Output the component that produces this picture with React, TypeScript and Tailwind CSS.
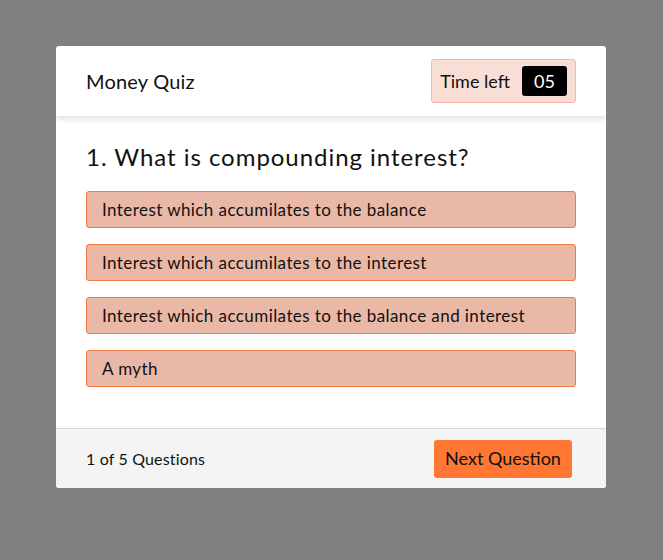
import React from 'react'

const options = [
  'Interest which accumilates to the balance',
  'Interest which accumilates to the interest',
  'Interest which accumilates to the balance and interest',
  'A myth',
]

export default function App() {
  return (
    <div
      className="min-h-[560px] w-full bg-[#808080] pt-[46px] text-[#111]"
      style={{ fontFamily: 'Lato, "Open Sans", sans-serif' }}
    >
      <div className="ml-[56px] w-[550px] overflow-hidden rounded-[3px] bg-white">
        {/* header */}
        <div className="relative z-10 flex h-[70px] items-center justify-between pl-[30px] pr-[30px] shadow-[0_3px_6px_rgba(0,0,0,0.12)]">
          <div className="text-[20px] tracking-[0.01em]">Money Quiz</div>
          <div className="flex h-[44px] items-center gap-[12px] rounded-[3px] border border-[#f5b8a5] bg-[#f8ded4] pl-[8px] pr-[8px]">
            <span className="text-[18px]">Time left</span>
            <span className="flex h-[30px] w-[45px] items-center justify-center rounded-[3px] bg-black text-[18px] text-white">
              05
            </span>
          </div>
        </div>

        {/* body */}
        <div className="px-[30px] pb-[41px] pt-[26px]">
          <h2 className="mb-[19px] text-[24px] leading-[30px] tracking-[0.04em]">1. What is compounding interest?</h2>
          <div className="flex flex-col gap-[16px]">
            {options.map(o => (
              <div
                key={o}
                className="flex h-[37px] items-center rounded-[3px] border border-[#f57a3d] bg-[#eab8a6] px-[15px] text-[17px] tracking-[0.025em]"
              >
                {o}
              </div>
            ))}
          </div>
        </div>

        {/* footer */}
        <div className="flex h-[60px] items-center justify-between border-t border-[#d6d6d6] bg-[#f4f4f4] pl-[30px] pr-[34px]">
          <span className="text-[16px] tracking-[0.01em]">1 of 5 Questions</span>
          <button className="h-[38px] w-[138px] rounded-[3px] bg-[#ff7733] text-[18px] text-[#111]">
            Next Question
          </button>
        </div>
      </div>
    </div>
  )
}
